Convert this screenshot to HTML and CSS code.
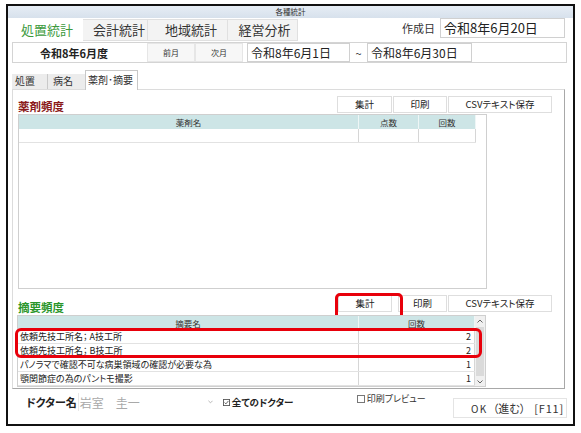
FILE: index.html
```html
<!DOCTYPE html>
<html lang="ja">
<head>
    <meta charset="UTF-8">
    <meta name="viewport" content="width=device-width, initial-scale=1.0">
    <title>各種統計</title>
    <link rel="stylesheet" href="styles.css">
</head>
<body>
    <div class="window">
        <div class="titlebar">各種統計</div>

        <div class="client">
            <!-- top tabs + creation date -->
            <div class="top-row">
                <div class="main-tabs">
                    <div class="main-tab active tab-treat">処置統計</div>
                    <div class="main-tab tab-account">会計統計</div>
                    <div class="main-tab tab-area">地域統計</div>
                    <div class="main-tab tab-manage">経営分析</div>
                </div>
                <div class="created">
                    <span class="created-label">作成日</span>
                    <div class="field created-field">令和8年6月20日</div>
                </div>
            </div>

            <!-- period selector -->
            <div class="period">
                <div class="period-title">令和8年6月度</div>
                <div class="nav-btn">前月</div>
                <div class="nav-btn">次月</div>
                <div class="field period-field period-from">令和8年6月1日</div>
                <span class="tilde">~</span>
                <div class="field period-field period-to">令和8年6月30日</div>
            </div>

            <div class="sub-tabs">
                <div class="sub-tab tab-proc">処置</div>
                <div class="sub-tab tab-disease">病名</div>
                <div class="sub-tab active tab-drug">薬剤･摘要</div>
            </div>

            <div class="panel">
                <!-- drugs -->
                <div class="section-head">
                    <h2 class="section-title drug-title">薬剤頻度</h2>
                    <div class="actions">
                        <div class="btn btn-sum">集計</div>
                        <div class="btn btn-print">印刷</div>
                        <div class="btn btn-csv">CSVテキスト保存</div>
                    </div>
                </div>
                <div class="grid drug-grid">
                    <div class="grid-cols">
                        <div class="grid-head">
                            <span>薬剤名</span><span>点数</span><span>回数</span>
                        </div>
                        <div class="grid-row">
                            <span></span><span></span><span></span>
                        </div>
                    </div>
                    <div class="grid-strip"></div>
                </div>

                <!-- memos -->
                <div class="section-head memo-head">
                    <h2 class="section-title memo-title">摘要頻度</h2>
                    <div class="actions memo-actions">
                        <div class="btn btn-sum marked">集計</div>
                        <div class="btn btn-print">印刷</div>
                        <div class="btn btn-csv">CSVテキスト保存</div>
                    </div>
                </div>
                <div class="grid memo-grid">
                    <div class="grid-cols">
                        <div class="grid-head">
                            <span>摘要名</span><span>回数</span>
                        </div>
                        <div class="grid-row">
                            <span>依頼先技工所名； A技工所</span><span class="num">2</span>
                        </div>
                        <div class="grid-row">
                            <span>依頼先技工所名； B技工所</span><span class="num">2</span>
                        </div>
                        <div class="grid-row">
                            <span>パノラマで確認不可な病巣領域の確認が必要な為</span><span class="num">1</span>
                        </div>
                        <div class="grid-row">
                            <span>顎関節症の為のパントモ撮影</span><span class="num">1</span>
                        </div>
                    </div>
                    <div class="scrollbar">
                        <svg class="arrow" viewBox="0 0 6 4"><polyline points="0.5,3.5 3,1 5.5,3.5"/></svg>
                        <div class="thumb"></div>
                        <svg class="arrow" viewBox="0 0 6 4"><polyline points="0.5,0.5 3,3 5.5,0.5"/></svg>
                    </div>
                    <div class="row-mark"></div>
                </div>
            </div>

            <div class="footer">
                <div class="doctor-label">ドクター名</div>
                <div class="doctor-combo">
                    <span>岩室　圭一</span>
                    <svg class="combo-arrow" viewBox="0 0 6 4"><polyline points="0.5,0.5 3,3 5.5,0.5"/></svg>
                </div>
                <label class="all-doctors">
                    <svg class="check" viewBox="0 0 8 8"><rect x="0.5" y="0.5" width="7" height="7"/><polyline points="1.8,4 3.3,5.6 6.2,2.2"/></svg>
                    全てのドクター
                </label>
                <label class="preview">
                    <svg class="check" viewBox="0 0 8 8"><rect x="0.5" y="0.5" width="7" height="7"/></svg>
                    印刷プレビュー
                </label>
                <div class="ok-btn">
                    <span class="ok-key">OK</span>
                    <span class="ok-note">（進む）</span>
                    <span class="ok-fkey">[F11]</span>
                </div>
            </div>
        </div>
    </div>
</body>
</html>
```

FILE: styles.css
```css
* {
    margin: 0;
    padding: 0;
    box-sizing: border-box;
}

body {
    font-family: "Noto Sans CJK JP", "Noto Sans", sans-serif;
    font-feature-settings: "palt";
    background: #fff;
    color: #222;
}

.window {
    width: 569px;
    height: 422px;
    margin: 4px 0 0 6px;
    border: 2px solid #111;
    display: flex;
    flex-direction: column;
}

.titlebar {
    height: 12px;
    background: linear-gradient(#e6edf5, #d7e1ec);
    font-size: 7.5px;
    line-height: 12px;
    text-align: center;
    color: #333;
}

.client {
    flex: 1;
    display: flex;
    flex-direction: column;
    padding-left: 4px;
}

/* top row */
.top-row {
    height: 24px;
    display: flex;
    align-items: flex-end;
}

.main-tabs {
    display: flex;
    height: 22px;
    margin-bottom: 1px;
}

.main-tab {
    font-size: 13px;
    line-height: 20px;
    color: #333;
    text-align: center;
    background: #f3f3f3;
    border: 1px solid #e0e0e0;
    border-left: none;
}

.main-tab.active {
    background: #fff;
    color: #3c9a3c;
    border-color: #fff;
}

.tab-treat { width: 71px; }
.tab-account { width: 65px; padding-left: 8px; }
.tab-area { width: 80px; padding-left: 7px; }
.tab-manage { width: 70px; padding-left: 4px; }

.created {
    margin-left: auto;
    margin-right: 8px;
    align-self: flex-start;
    height: 20px;
    display: flex;
    align-items: center;
}

.created-label {
    font-size: 11px;
    color: #333;
    margin-right: 5px;
}

.field {
    border: 1px solid #d0d0d0;
    background: #fff;
    color: #222;
    white-space: nowrap;
}

.created-field {
    width: 125px;
    height: 20px;
    font-size: 13px;
    line-height: 18px;
    padding-left: 3px;
}

/* period */
.period {
    width: 555px;
    height: 21px;
    border: 1px solid #d4d4d4;
    display: flex;
    align-items: center;
}

.period-title {
    font-size: 11px;
    font-weight: bold;
    margin-left: 27px;
    width: 107px;
}

.nav-btn {
    width: 48px;
    height: 19px;
    font-size: 8px;
    line-height: 17px;
    text-align: center;
    background: #f7f7f7;
    border: 1px solid #e6e6e6;
    color: #333;
}

.period-field {
    height: 19px;
    font-size: 12px;
    line-height: 17px;
    padding-left: 3px;
}

.period-from {
    width: 103px;
    margin-left: 4px;
}

.period-to {
    width: 105px;
}

.tilde {
    width: 17px;
    text-align: center;
    font-size: 11px;
    color: #333;
}

/* sub tabs */
.sub-tabs {
    margin-top: 7px;
    height: 19px;
    display: flex;
    align-items: flex-end;
    position: relative;
    z-index: 1;
}

.sub-tab {
    height: 15px;
    font-size: 10px;
    line-height: 14px;
    background: #ececec;
    border-right: 1px solid #c9c9c9;
    color: #333;
}

.tab-proc { width: 36px; padding-left: 3px; }
.tab-disease { width: 37px; padding-left: 5px; border-right: none; }

.sub-tab.active {
    width: 53px;
    height: 20px;
    margin-bottom: -1px;
    background: #fff;
    border: 1px solid #c8c8c8;
    border-bottom: none;
    line-height: 17px;
    padding-left: 2px;
}

/* panel */
.panel {
    width: 553px;
    height: 300px;
    border: 1px solid #dcdcdc;
    border-right-color: #a8a8a8;
    border-bottom-color: #a8a8a8;
    padding: 6px 12px 0 5px;
    display: flex;
    flex-direction: column;
}

.section-head {
    height: 18px;
    display: flex;
    align-items: flex-end;
}

.section-title {
    font-size: 11.5px;
    font-weight: bold;
    line-height: 14px;
    margin-bottom: 1px;
}

.drug-title { color: #8b1a1a; }
.memo-title { color: #2b962b; }

.actions {
    margin-left: auto;
    display: flex;
    gap: 1px;
    margin-bottom: 1px;
}

.btn {
    height: 17px;
    font-size: 9.5px;
    line-height: 15px;
    text-align: center;
    border: 1px solid #dedede;
    background: #fff;
    color: #222;
}

.btn-sum { width: 55px; }
.btn-print { width: 54px; }
.btn-csv { width: 104px; }

.memo-head {
    height: 26px;
}

.memo-actions {
    margin-bottom: 3px;
}

.memo-actions .btn-sum { width: 54px; margin-right: 5px; }
.memo-actions .btn-print { width: 49px; }

.marked {
    position: relative;
}

.marked::after {
    content: "";
    position: absolute;
    left: -4px;
    top: -3px;
    width: 62px;
    height: 21px;
    border: 3px solid #e8000b;
    border-radius: 5px;
}

/* grids */
.grid {
    width: 469px;
    display: flex;
    border: 1px solid #cfcfcf;
    background: #fff;
}

.drug-grid {
    height: 175px;
}

.memo-grid {
    height: 72px;
    margin-left: -1px;
    position: relative;
}

.grid-cols {
    width: 457px;
}

.grid-strip {
    flex: 1;
}

.grid-head,
.grid-row {
    display: grid;
    height: 14px;
}

.drug-grid .grid-head,
.drug-grid .grid-row {
    grid-template-columns: 340px 60px 57px;
}

.memo-grid .grid-head,
.memo-grid .grid-row {
    grid-template-columns: 341px 116px;
}

.grid-head {
    background: #cde5e6;
    font-size: 8.5px;
    line-height: 14px;
    text-align: center;
    color: #333;
}

.grid-head span {
    border-right: 1px solid #eef6f6;
}

.grid-row {
    border-bottom: 1px solid #e2e2e2;
    font-size: 9px;
    line-height: 13px;
}

.grid-row span {
    border-right: 1px solid #d6d6d6;
    padding-left: 2px;
    white-space: nowrap;
    overflow: hidden;
}

.grid-row .num {
    text-align: right;
    padding-right: 3px;
}

.scrollbar {
    flex: 1;
    background: #f0f0f0;
    display: flex;
    flex-direction: column;
    align-items: center;
    padding: 3px 0 2px;
}

.scrollbar .arrow {
    width: 6px;
    height: 4px;
    fill: none;
    stroke: #666;
    stroke-width: 1;
}

.thumb {
    flex: 1;
    width: 8px;
    margin: 4px 0;
    background: #dadada;
}

.row-mark {
    position: absolute;
    left: -3px;
    top: 12px;
    width: 467px;
    height: 30px;
    border: 3px solid #e8000b;
    border-radius: 6px;
}

/* footer */
.footer {
    flex: 1;
    display: flex;
    align-items: flex-start;
}

.doctor-label {
    margin: 5px 0 0 14px;
    font-size: 11px;
    font-weight: bold;
    line-height: 16px;
}

.doctor-combo {
    margin: 4px 0 0 1px;
    width: 140px;
    height: 18px;
    border-left: 1px solid #e8e8e8;
    display: flex;
    align-items: center;
    font-size: 12px;
    color: #a9a9a9;
    padding-left: 1px;
}

.combo-arrow {
    width: 5px;
    height: 4px;
    margin-left: auto;
    margin-right: 5px;
    fill: none;
    stroke: #aaa;
}

.check {
    width: 7px;
    height: 7px;
    fill: none;
    stroke: #555;
    stroke-width: 1;
    margin-right: 2px;
}

.all-doctors {
    margin: 6px 0 0 5px;
    width: 134px;
    display: flex;
    align-items: center;
    font-size: 9.5px;
    font-weight: bold;
    line-height: 14px;
}

.preview {
    margin-top: 4px;
    display: flex;
    align-items: center;
    font-size: 9px;
    line-height: 12px;
    color: #333;
}

.preview .check {
    width: 8px;
    height: 8px;
    stroke: #777;
}

.ok-btn {
    margin: 9px 6px 0 auto;
    width: 114px;
    height: 20px;
    border: 1px solid #e4e4e4;
    display: flex;
    align-items: center;
    justify-content: flex-end;
    padding-right: 2px;
    font-size: 11px;
    color: #333;
}

.ok-key {
    font-size: 10px;
    letter-spacing: 1.5px;
}

.ok-note {
    margin-left: 5px;
}

.ok-fkey {
    margin-left: 9px;
    letter-spacing: 0.8px;
}
```
